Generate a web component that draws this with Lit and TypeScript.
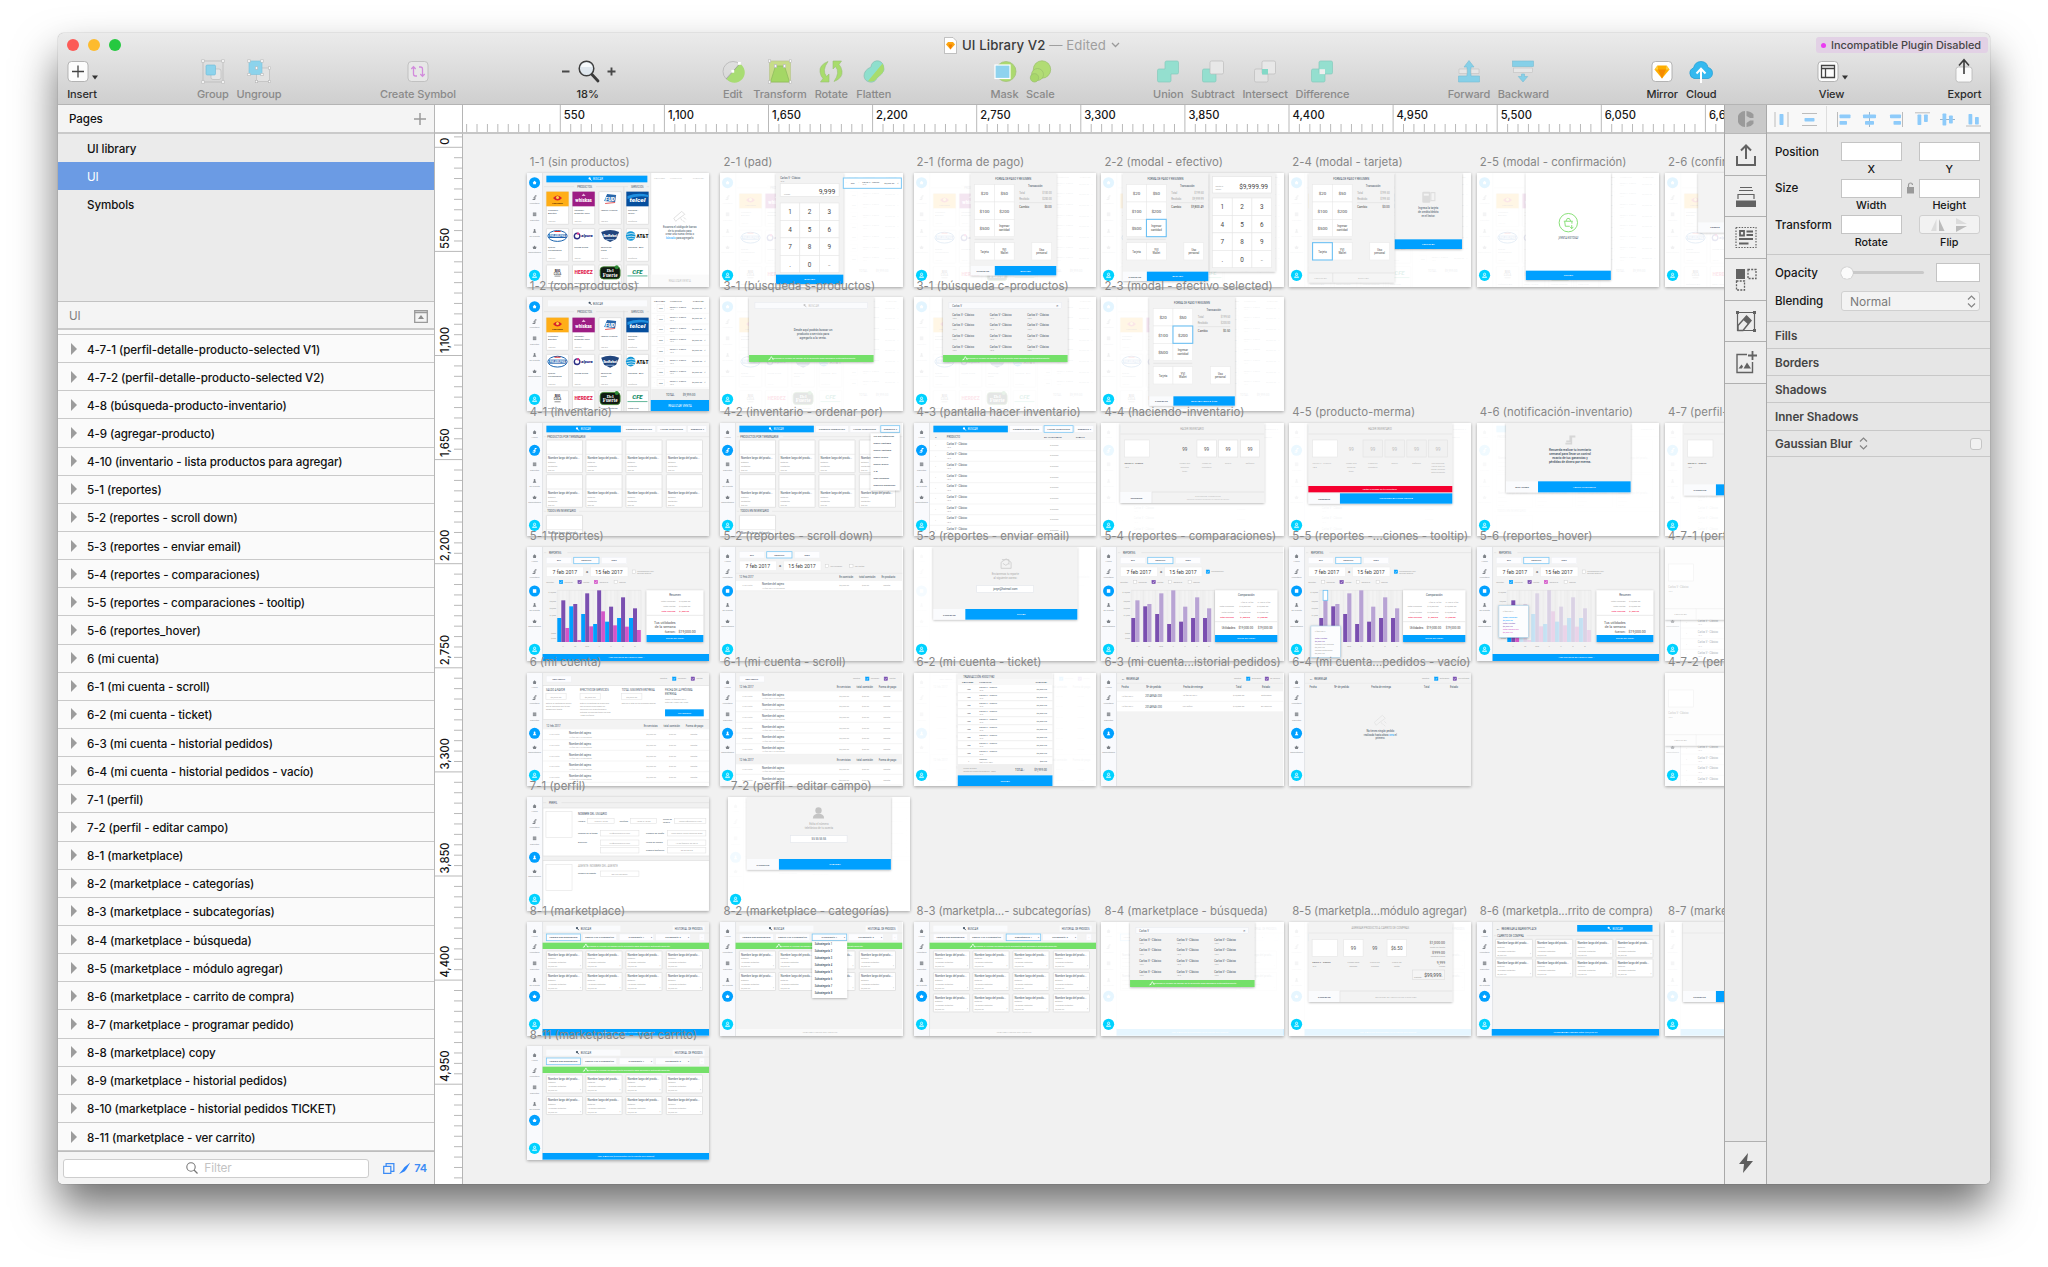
import { LitElement, html, svg, css, nothing } from "lit";
import { customElement, property } from "lit/decorators.js";

/* ------------------------------------------------------------------ */
/* Artboard miniatures: drawn on a 433 x 342 grid, UX/UY px per unit   */
/* ------------------------------------------------------------------ */
const UX = 1 / 2.376;
const UY = 1 / 3;
const BLUE = "#00a0ff";
const INK = "#3d4f61";
const GREY = "#a2a2a2";

type Opt = { s?: string; r?: number; o?: number; sw?: number };
type TOpt = { a?: "start" | "middle" | "end"; w?: number; o?: number };

const box = (x1: number, y1: number, x2: number, y2: number, fill: string, o: Opt = {}) => svg`
  <rect x=${x1 * UX} y=${y1 * UY} width=${(x2 - x1) * UX} height=${(y2 - y1) * UY} fill=${fill}
    stroke=${o.s ?? "none"} stroke-width=${o.sw ?? 0.6} rx=${o.r ?? 0} opacity=${o.o ?? 1}></rect>`;
const txt = (x: number, y: number, s: string, size = 2.6, fill = INK, o: TOpt = {}) => svg`
  <text x=${x * UX} y=${y * UY + size * 0.35} font-size=${size} fill=${fill} text-anchor=${o.a ?? "start"}
    font-weight=${o.w ?? 400} opacity=${o.o ?? 1}>${s}</text>`;
const mid = (x: number, y: number, s: string, size = 2.6, fill = INK, w = 400) => txt(x, y, s, size, fill, { a: "middle", w });
const end = (x: number, y: number, s: string, size = 2.6, fill = INK, w = 400) => txt(x, y, s, size, fill, { a: "end", w });
const dot = (x: number, y: number, r: number, fill: string) => svg`<circle cx=${x * UX} cy=${y * UY} r=${r} fill=${fill}></circle>`;
const line = (x1: number, y1: number, x2: number, y2: number, c = "#dedede", w = 0.6) => svg`
  <line x1=${x1 * UX} y1=${y1 * UY} x2=${x2 * UX} y2=${y2 * UY} stroke=${c} stroke-width=${w}></line>`;
const card = (x1: number, y1: number, x2: number, y2: number) => box(x1, y1, x2, y2, "#fff", { s: "#e0e0e0", sw: 0.9, r: 0.4 });
const seq = (n: number) => Array.from({ length: n }, (_, i) => i);

const glyph = (kind: number, c: string) => {
  switch (kind) {
    case 0: return svg`<path d="M-2 0L0-2L2 0H1.4V1.7H-1.4V0Z" fill=${c}></path>`;
    case 1: return svg`<path d="M-2 1.8H.4V-1.8H2M-1.2 .2H.4" fill="none" stroke=${c} stroke-width="1"></path>`;
    case 2: return svg`<rect x="-1.7" y="-1.8" width="3.4" height="3.6" fill=${c}></rect><path d="M-1.7-.5H1.7M-1.7.7H1.7" stroke="#fff" stroke-width=".3"></path>`;
    case 3: return svg`<circle r=".9" cy="-1" fill=${c}></circle><path d="M-.5-.4H.5L1.8 1.8H-1.8Z" fill=${c}></path>`;
    default: return svg`<path d="M-2-.6H2L1.3 1.6H-1.3ZM-1-.6L0-1.9L1-.6" fill=${c}></path>`;
  }
};
const NAV = ["Home", "Inventario", "Reportes", "Mi Cuenta", "Marketplace"];
const ICON_Y = [28, 74, 124, 174, 223];
const LABEL_Y = [44, 91, 141, 191, 239];
const ACTIVE_Y = [29, 82, 132, 181, 223];
const nav = (active: number) => svg`
  ${box(0, 0, 37, 342, "#f9fafd")}${line(37, 0, 37, 342, "#d9dbde", 0.7)}
  ${NAV.map((n, i) => i === active
    ? svg`${dot(18, ACTIVE_Y[i], 5.5, BLUE)}<g transform="translate(${18 * UX} ${ACTIVE_Y[i] * UY})">${glyph(i, "#fff")}</g>`
    : svg`<g transform="translate(${18 * UX} ${ICON_Y[i] * UY})">${glyph(i, "#7d8288")}</g>${mid(18, LABEL_Y[i], n, 2.3, "#8d9298", 400)}`)}`;
const badge = svg`${dot(18, 307, 5.6, "#00d2ff")}
  <g transform="translate(${18 * UX} ${307 * UY})"><circle cy="-1.1" r="1.1" fill="none" stroke="#fff" stroke-width=".7"></circle><path d="M-2 2.2H2L1 .5H-1Z" fill="none" stroke="#fff" stroke-width=".7"></path></g>`;
const scrim = (o = 0.88) => box(0, 0, 433, 342, "#fff", { o });
const btn = (x1: number, y1: number, x2: number, y2: number, s: string, size = 2.5) => svg`
  ${box(x1, y1, x2, y2, BLUE)}${mid((x1 + x2) / 2, (y1 + y2) / 2, s, size, "#fff")}`;
const chip = (x1: number, y1: number, x2: number, y2: number, s: string, on = false, size = 2.5) => svg`
  ${box(x1, y1, x2, y2, "#fdfdff", { s: on ? "#7cc8f5" : "#eceef2", sw: on ? 0.8 : 0.4 })}${mid((x1 + x2) / 2, (y1 + y2) / 2, s, size, INK, 500)}`;
const lens = (x: number, y: number, c: string) => svg`<g transform="translate(${x * UX} ${y * UY})"><circle cx="-.5" cy="-.6" r="1.1" fill=${c}></circle><path d="M0 0L1.3 1.5" stroke=${c} stroke-width=".9"></path></g>`;
const panel = (x1: number, y1: number, x2: number, y2: number, fill = "#f3f3f3") => svg`
  <rect x=${x1 * UX} y=${y1 * UY} width=${(x2 - x1) * UX} height=${(y2 - y1) * UY} fill=${fill} filter="url(#lift)"></rect>`;
const foot = (x1: number, y1: number, xm: number, x2: number, y2: number, a: string, b: string) => svg`
  ${box(x1, y1, xm, y2, "#fafbfd")}${mid((x1 + xm) / 2, (y1 + y2) / 2 + 1, a, 2.5, INK, 600)}${btn(xm, y1, x2, y2, b)}`;
const scanner = (x: number, y: number, c = "#dcdcdc") => svg`
  <g transform="translate(${x * UX} ${y * UY})" stroke=${c} fill="none" stroke-width=".9"><path d="M-6 2L2-5L5-2L-2 3L-4 5ZM1 2L2 4M4 1L6 3M3 4L5 6"></path></g>`;
const greenBar = (x1: number, y1: number, x2: number, y2: number) => svg`
  ${box(x1, y1, x2, y2, "#74e069")}${mid((x1 + x2) / 2 + 6, (y1 + y2) / 2, "Escanea el código de barras de tu producto para agregarlo automáticamente", 2.45, "#fff")}
  <path d="M${(x1 + x2) * UX / 2 - 42} ${(y1 + y2) * UY / 2 + 1.5}l2-3.4l2 3.4M${(x1 + x2) * UX / 2 - 43} ${(y1 + y2) * UY / 2 + 1.5}l2-1" stroke="#fff" stroke-width=".7" fill="none"></path>`;
const check = (x: number, y: number, c: string, s: string) => svg`
  ${box(x - 4, y - 5, x + 4, y + 5, c || "#fff", { s: c || "#cfcfcf", sw: 0.5 })}
  ${c ? svg`<path d="M${x * UX - 0.9} ${y * UY}l.7 .8l1.1-1.6" stroke="#fff" stroke-width=".5" fill="none"></path>` : nothing}
  ${txt(x + 8, y, s, 2.1, GREY)}`;

/* --- point of sale --- */
const logo = (r: number, c: number, x: number, y: number) => {
  const cx = (x + 26.5) * UX, cy = (y + 22) * UY;
  const g = (body: unknown) => svg`<g transform="translate(${cx} ${cy})" text-anchor="middle" font-weight="900">${body}</g>`;
  switch (r * 4 + c) {
    case 0: return svg`${box(x, y, x + 53, y + 44, "#ffae17")}${g(svg`<path d="M-4.5-1Q0-6 4.5-1Q0 4 -4.5-1" fill="#d8232a"></path><circle cy="-1.6" r="1.5" fill="#ffd24a"></circle><text y="5" font-size="2.3" fill="#5b2b00">PEDIGREE</text>`)}`;
    case 1: return svg`${box(x, y, x + 53, y + 44, "#9d1d84")}${g(svg`<path d="M-2-3L0-5.5L2-3Z" fill="#e8b7dc"></path><text y="2.6" font-size="5.2" fill="#fff" textLength="16.5" lengthAdjust="spacingAndGlyphs">whiskas</text>`)}`;
    case 2: return g(svg`<path d="M-6 2L-3-5L6-4L5 3Z" fill="#2a67ab"></path><text y="1.8" font-size="5.4" fill="#fff" font-style="italic">FUD</text><path d="M-5 4.5L5 3.5" stroke="#d33" stroke-width=".8"></path>`);
    case 3: return svg`${box(x, y, x + 53, y + 44, "#064f9e")}${g(svg`<path d="M-10-3Q0-7 11-4L11-2Q0-4-10 0Z" fill="#1f8fe0"></path><text y="2.6" font-size="5.2" fill="#fff" font-style="italic" textLength="16" lengthAdjust="spacingAndGlyphs">telcel</text>`)}`;
    case 4: return g(svg`<ellipse rx="9.6" ry="5.4" fill="#fff" stroke="#1b63ae" stroke-width="1"></ellipse><rect x="-8.400" y="-2" width="16.800" height="4" fill="#1d5fae"></rect><text y="1.100" font-size="3" fill="#fff" textLength="15.500" lengthAdjust="spacingAndGlyphs">PHILADELPHIA</text><path d="M-3-4.500H3" stroke="#d22" stroke-width="1"></path>`);
    case 5: return g(svg`<circle cx="-6.500" r="2.800" fill="none" stroke="#2c2f86" stroke-width="1.400"></circle><circle cx="-5.500" cy="-2.400" r="1.200" fill="#e2388c"></circle><text x="3.400" y="1.400" font-size="4.200" fill="#2c2f86" font-style="italic">alpura</text>`);
    case 6: return g(svg`<path d="M-9-4Q0-8 9-4L6 3L0 6L-6 3Z" fill="#21457e"></path><text y="1" font-size="4" fill="#fff" textLength="14" lengthAdjust="spacingAndGlyphs">SanRafael</text><path d="M-4 3.6H4" stroke="#9cc1e8" stroke-width=".8"></path>`);
    case 7: return g(svg`<circle cx="-6.800" r="4.800" fill="#1096d6"></circle><path d="M-11-1.6Q-6-3.4-2-1.6M-11 1Q-6-.6-1.7 1M-9.6 3Q-6 2-3 3" stroke="#fff" stroke-width=".7" fill="none"></path><text x="5" y="1.900" font-size="5" fill="#111" textLength="12" lengthAdjust="spacingAndGlyphs">AT&amp;T</text>`);
    case 8: return g(svg`<text y="-.6" font-size="3.4" fill="#444">BIG</text><text y="2.400" font-size="2.900" fill="#666">COLA</text><path d="M-3 3.8H3" stroke="#777" stroke-width=".8"></path>`);
    case 9: return g(svg`<text y="2" font-size="4.6" fill="#e11a4c" textLength="18" lengthAdjust="spacingAndGlyphs">HERDEZ</text>`);
    case 10: return g(svg`<rect x="-10" y="-5.6" width="20" height="12.2" rx="3.4" fill="#101b12" stroke="#3f8a2f" stroke-width=".8"></rect><circle cx="6.6" cy="-5" r="2" fill="#2d8a35"></circle><text y="-.3" font-size="4.8" fill="#fff" font-family="Liberation Serif, serif">Del</text><text y="4.4" font-size="5.2" fill="#fff" font-family="Liberation Serif, serif">Fuerte</text>`);
    default: return g(svg`<text y="1.500" font-size="6" fill="#0f8a63" font-style="italic">CFE</text><path d="M-10 3.6H10" stroke="#3aa57f" stroke-width=".8"></path>`);
  }
};
const NAMES = [["Pedigree -", "Adultos", "100 grs"], ["Whiskas -", "alimento seco", "100 grs"], ["Jamón Virginia", "", "100 grs"], ["Recarga -", "Telcel", "Telefonía"],
  ["Queso", "Philadelphia", "100 grs"], ["Crema ácida", "", "100 ml"], ["Salchicha", "viena", "100 grs"], ["Recarga - ATT", "", "Telefonía"],
  ["Refresco Big", "", ""], ["Mole Herdez", "", ""], ["Frijoles enteros", "", ""], ["Pago CFE", "", ""]];
const CARD_X = [46, 108, 171, 236];
const saleRow = (y: number) => svg`
  ${txt(302, y, "‹", 2.4, GREY)}${box(309, y - 10, 327, y + 10, "#fff", { s: "#ececec", sw: 0.4 })}${mid(318, y + 1, "999", 2.3)}${txt(332, y, "›", 2.4, GREY)}
  ${txt(339, y - 3, "Carlos V - Clásico", 2.1)}${txt(339, y + 5, "18 g", 2, GREY)}${end(416, y, "$9,999.99", 2.3)}${txt(421, y, "✕", 2.2)}
  ${line(296, y + 16, 432, y + 16, "#eee", 0.4)}`;
const pos = (full: boolean, behind = false) => {
  const dy = full ? 6 : 0;
  const ys = [56 + dy, 167 + dy / 1.2, 276 + dy / 1.2];
  return svg`
    ${box(0, 0, 433, 342, behind ? "#f8f8f8" : "#f1f1f1")}${nav(0)}
    ${full ? svg`${box(50, 10, 285, 28, "#fafbfd")}${lens(150, 19, INK)}${txt(157, 20, "BUSCAR")}` : svg`${box(46, 8, 286, 28, BLUE)}${lens(150, 18, "#fff")}${txt(157, 19, "BUSCAR", 2.6, "#fff")}`}
    ${line(40, 41 + dy / 2, 290, 41 + dy / 2)}${box(112, 37, 164, 49, "#f1f1f1")}${box(240, 37, 284, 49, "#f1f1f1")}
    ${mid(137, 41 + dy / 2, "PRODUCTOS")}${mid(262, 41 + dy / 2, "SERVICIOS")}${line(230, 41, 230, 342, "#ddd", 0.8)}
    ${seq(12).map((i) => {
      const r = Math.floor(i / 4), c = i % 4, x = CARD_X[c], y = ys[r];
      return svg`${card(x, y, x + 53, y + 98)}${logo(r, c, x, y)}
        ${txt(x + 4, y + (r === 2 ? 53 : 55), NAMES[i][0], 2.5)}${txt(x + 4, y + 65, NAMES[i][1], 2.5)}${txt(x + 4, y + 90, NAMES[i][2], 2.2, GREY)}`;
    })}
    ${box(294, 0, 433, 342, "#fff")}${line(294, 0, 294, 342, "#ddd")}
    ${txt(302, full ? 12 : 16, "CANTIDAD", 2.3, full ? "#666" : "#ccc")}${txt(340, full ? 12 : 16, "PRODUCTO", 2.3, full ? "#666" : "#ccc")}${txt(394, full ? 12 : 16, "SUBTOTAL", 2.3, full ? "#666" : "#ccc")}
    ${full
      ? svg`${seq(8).map((i) => saleRow(33 + i * 32))}${box(295, 276, 433, 309, behind ? "#fafafa" : "#efefef")}${txt(330, 293, "TOTAL", 2.9)}${end(400, 293, "$9,999.00", 2.9)}${behind ? nothing : btn(294, 309, 433, 342, "REALIZAR VENTA", 3)}`
      : svg`${scanner(363, 130)}${mid(363, 162, "Escanea el código de barras", 2.7)}${mid(363, 173, "de tu producto para", 2.7)}${mid(363, 184, "crear una nueva venta o", 2.7)}
        <text x=${363 * UX} y=${196 * UY + 0.9} font-size="2.7" fill=${INK} text-anchor="middle"><tspan fill=${BLUE}>búscalo</tspan> para agregarlo</text>
        ${box(294, 305, 433, 342, "#fafafa")}${mid(363, 323, "REALIZAR VENTA", 2.8, "#c4c4c4")}`}`;
};
const fadedPos = svg`${pos(true, true)}${scrim(0.89)}`;

const keypad = (x: number, y: number, w: number, h: number, last: string) =>
  ["1", "2", "3", "4", "5", "6", "7", "8", "9", ".", "0", last].map((k, i) => {
    const kx = x + (i % 3) * w, ky = y + Math.floor(i / 3) * h;
    return svg`${box(kx, ky, kx + w, ky + h, "#fff", { s: "#e6e6e6", sw: 0.6 })}${mid(kx + w / 2, ky + h / 2 + 1, k, i === 11 ? 3.6 : 6.4, "#4a4a4a", 400)}`;
  });
const pay = (dx: number, hl: string, bottom: number, total: string[], accept: string, off = false) => {
  const cell = (x: number, y: number, s: string[]) => svg`
    ${box(x + dx, y, x + 47 + dx, y + 52, "#fff", { s: s[0] === hl ? "#6cc0f3" : "#e8e8e8", sw: s[0] === hl ? 1.1 : 0.5 })}
    ${s.map((t, i) => mid(x + 23.5 + dx, y + 27 + (i - (s.length - 1) / 2) * 11, t, s[0][0] === "$" ? 4.4 : 2.8, "#4a4a4a", 400))}`;
  const order = [["$20"], ["$50"], ["$100"], ["$200"], ["$500"], ["Ingresar", "cantidad"]];
  const cells: Array<[number, number, string[]]> = order.map((s, i) => [144 + (i % 2) * 47, 35 + Math.floor(i / 2) * 52, s]);
  cells.push([144, 209, ["Tarjeta"]], [191, 209, ["YVI", "Wallet"]], [280, 209, ["Uso", "personal"]]);
  const ordered = [...cells.filter((c) => c[2][0] !== hl), ...cells.filter((c) => c[2][0] === hl)];
  return svg`
    ${panel(135 + dx, 0, 338 + dx, bottom)}${mid(236 + dx, 17, "FORMA DE PAGO Y RESUMEN", 2.7)}
    ${ordered.map(([x, y, s]) => cell(x, y, s))}
    ${line(144 + dx, 199, 237 + dx, 199)}
    ${mid(288 + dx, 40, "Transacción", 2.7)}${txt(250 + dx, 61, "Total", 2.6, GREY)}${end(327 + dx, 61, total[0], 2.6, GREY)}
    ${txt(250 + dx, 77, "Recibido", 2.6, GREY)}${end(327 + dx, 77, total[1], 2.6, GREY)}${line(250 + dx, 89, 327 + dx, 89)}
    ${txt(250 + dx, 103, "Cambio", 2.9, "#444")}${end(327 + dx, 103, total[2], 2.9, "#444")}
    ${off
      ? svg`${box(135 + dx, bottom - 28, 338 + dx, bottom, "#f5f5f5")}${line(192 + dx, bottom - 28, 192 + dx, bottom)}${line(135 + dx, bottom - 28, 338 + dx, bottom - 28)}${mid(163 + dx, bottom - 14, "CANCELAR", 2.5, "#c8c8c8")}${mid(265 + dx, bottom - 14, "ACEPTAR", 2.5, "#c8c8c8")}`
      : foot(135 + dx, bottom - 28, 192 + dx, 338 + dx, bottom, "CANCELAR", accept)}`;
};
const found = svg`${seq(12).map((i) => svg`${txt(91 + (i % 3) * 89, 53 + Math.floor(i / 3) * 32, "Carlos V - Clásico", 2.8)}${txt(91 + (i % 3) * 89, 64 + Math.floor(i / 3) * 32, "18 g", 2.2, GREY)}`)}`;
const search = (hit: boolean) => svg`
  ${panel(69, 0, 365, 195)}${box(83, 16, 351, 35, "#fafbfd", { s: "#e5e8ee", sw: 0.5 })}
  ${hit ? svg`${txt(91, 26, "Carlos V", 2.6)}${txt(338, 26, "✕", 3)}${found}`
    : svg`${lens(202, 26, "#c5c5c5")}${txt(210, 26, "BUSCAR", 2.8, "#c5c5c5")}${mid(221, 99, "Desde aquí podrás buscar un", 3)}${mid(221, 110, "producto o servicio para", 3)}${mid(221, 122, "agregarlo a la venta.", 3)}`}
  ${greenBar(69, 174, 365, 195)}`;

/* --- inventory --- */
const STOCK_X = [46, 140, 235, 331];
const stock = (x: number, y: number) => svg`${card(x, y, x + 86, y + 98)}${line(x, y + 43, x + 86, y + 43, "#e2e2e2")}
  ${txt(x + 4, y + 54, "Nombre largo del produ...", 2.8)}${txt(x + 4, y + 68, "Detalles", 2.1, GREY)}${txt(x + 4, y + 80, "Restantes", 2.1, GREY)}${txt(x + 4, y + 92, "$99.99", 2.1, GREY)}`;
const invTop = (hl: number) => svg`
  ${btn(46, 8, 223, 28, "")}${lens(120, 18, "#fff")}${txt(128, 19, "BUSCAR", 2.6, "#fff")}
  ${chip(227, 8, 305, 28, "AGREGAR PRODUCTOS")}${chip(309, 8, 378, 28, "HACER INVENTARIO", hl === 1)}${chip(382, 8, 427, 28, "ORDENAR ▾", hl === 2)}`;
const inventory = (menu: boolean) => svg`
  ${box(0, 0, 433, 342, "#f4f4f4")}${nav(1)}${invTop(menu ? 2 : 0)}
  ${line(40, 41, 433, 41, "#e2e2e2")}${box(46, 36, 150, 47, "#f4f4f4")}${txt(48, 41, "PRODUCTOS POR TERMINARSE", 2.7)}
  ${STOCK_X.map((x) => svg`${stock(x, 51)}${stock(x, 155)}`)}
  ${line(40, 265, 433, 265, "#e2e2e2")}${box(46, 260, 124, 270, "#f4f4f4")}${txt(48, 265, "TODOS EN INVENTARIO", 2.7)}${stock(46, 277)}
  ${menu ? svg`${panel(358, 31, 427, 202, "#fff")}${["Ver por categorías", "Mayor cantidad", "Menor cantidad", "Mayor precio", "Menor precio", "A-Z", "Más vendidos", "Mayores ganancias"].map((s, i) => txt(365, 40 + i * 21, s, 2.5, INK, { w: 500 }))}` : nothing}`;
const stockList = svg`
  ${box(0, 0, 433, 342, "#f4f4f4")}${nav(1)}${invTop(1)}
  ${txt(50, 41, "#", 2.5)}${txt(78, 41, "PRODUCTO", 2.6)}${mid(330, 41, "EN INVENTARIO", 2.5)}${mid(395, 41, "STATUS", 2.5)}
  ${box(38, 51, 433, 342, "#fff")}
  ${seq(9).map((i) => svg`${txt(50, 67 + i * 32, "1", 2, GREY)}${txt(78, 62 + i * 32, "Carlos V - Clásico", 2.6)}${txt(78, 73 + i * 32, "18 g", 2.1, GREY)}${mid(333, 66 + i * 32, "5 piezas", 2.3, GREY)}${line(38, 83 + i * 32, 433, 83 + i * 32, "#eee")}`)}`;
const count = (waste: boolean) => {
  const xs = waste ? [102, 154, 206, 258, 309] : [199, 251, 302, 354];
  const labels = [["Piezas que", "deberías", "tener"], ["Piezas en", "inventario"], ["Expiró"], ["Dañados"], ["Uso personal", "Haces que no", "hayas vendido", "anteriormente"]];
  const shift = waste ? 45 : 0;
  const h = waste ? 242 : 240;
  return svg`${stockList}${scrim(0.92)}${panel(46, 0, 388, h)}${mid(216, 17, "HACER INVENTARIO", 2.6, GREY)}${line(46, 33, 388, 33, "#e0e0e0")}
    ${box(56, 51, 115, 102, "#fff", { s: "#e6e6e6" })}${txt(56, 121, "Carlos V - Clásico", 2.4, waste ? "#bbb" : "#444")}${txt(56, 132, "18 g", 2.1, GREY)}
    ${(waste ? [148, 199, 251, 303, 354] : xs).map((x, i) => svg`
      ${i || shift === 0 && i ? box(x - (waste && i === 0 ? 0 : 23), 51, x + 23, 102, waste ? "#f1f1f1" : "#fff", { s: "#e2e2e2" }) : nothing}
      ${mid(x, 79, "99", 4.6, waste ? "#bdbdbd" : "#555", 400)}
      ${labels[i].map((s, j) => mid(x, 122 + j * (i === 4 ? 9 : 11), s, 2.2, "#b4b4b4"))}`)}
    ${waste
      ? svg`${box(46, 189, 388, 208, "#f5002f")}${mid(216, 199, "Faltan 5 piezas en tu inventario", 2.5, "#fff")}${foot(46, 211, 121, 388, 242, "CORREGIR", "INGRESARLAS COMO MERMA")}`
      : svg`${box(46, 207, 121, 240, "#fafbfd")}${mid(84, 224, "ANTERIOR", 2.5, INK, 600)}${line(121, 207, 388, 207)}${line(121, 207, 121, 240)}${mid(254, 220, "SIGUIENTE PRODUCTO", 2.5, "#c0c0c0")}${mid(254, 230, "También puedes escanear el código de barras", 2.1, "#c8c8c8")}`}
    ${badge}`;
};

/* --- reports --- */
const PURPLE = "#7a4fb0";
const PINK = "#d355c8";
const A = [213, 178, 201, 231, 224, 213, 213];
const B = [160, 171, 139, 130, 179, 151, 184];
const C = [243, 279, 238, 193, 235, 239, 249];
const tip = (y1: number, y2: number, rows: string[], colors: string[]) => svg`
  <rect x=${52 * UX} y=${y1 * UY} width=${70 * UX} height=${(y2 - y1) * UY} fill="#fcfdfe" stroke="#a9cfe6" stroke-width=".6" filter="url(#lift)"></rect>
  ${rows.map((s, i) => txt(61, y1 + 17 + i * 9.2, s, 2.3, colors[i]))}`;
const report = (mode: "plain" | "compare" | "tip" | "hover") => {
  const cmp = mode === "compare" || mode === "tip";
  const left = cmp ? 271 : 284;
  return svg`
    ${box(0, 0, 433, 342, "#f3f3f3")}${nav(2)}
    ${line(40, 17, 433, 17, "#ddd")}${box(46, 11, 96, 23, "#f3f3f3")}${txt(52, 17, "REPORTES", 2.6)}
    ${chip(46, 31, 106, 50, "DIA")}${chip(111, 31, 171, 50, "SEMANA", true)}${chip(177, 31, 237, 50, "MES")}
    ${box(46, 60, 134, 88, "#fff", { s: "#eee" })}${mid(90, 75, "7 feb 2017", 5.2, "#444", 400)}${mid(143, 75, "a", 4, "#444", 400)}${box(151, 60, 240, 88, "#fff", { s: "#eee" })}${mid(195, 75, "15 feb 2017", 5.2, "#444", 400)}
    ${check(254, 74, cmp ? BLUE : "", mode === "compare" ? "Comparación" : "Comparación con")}${mode === "compare" ? nothing : txt(262, 80, "periodo anterior", 2, GREY)}
    ${txt(46, 105, "Mostrar", 2.2, GREY)}${check(81, 105, cmp ? "" : BLUE, "Compras")}${check(125, 105, PURPLE, "Ventas")}${check(164, 105, cmp ? "" : PINK, "Ganancia")}${check(211, 105, "", "Merma")}
    ${["$10,000", "$5,000", "$3,000", "$1,000", "$500", "$300"].map((s, i) => end(69, [137, 163, 184, 204, 259, 274][i], s, 2.2, GREY))}
    ${seq(8).map((i) => line(72 + i * 28.4, 130, 72 + i * 28.4, 285, "#e2e2e2"))}${seq(21).map((i) => line(76 + i * 9.5, 130, 76 + i * 9.5, 285, "#e6e6e6", 0.4))}
    ${line(72, 130, 271, 130, "#ddd", 0.5)}
    ${seq(7).map((i) => {
      const x = 72 + i * 28.4;
      const o = mode === "hover" && i > 0 ? 0.18 : 1;
      return cmp
        ? svg`${box(x, A[i], x + 9.6, 285, PURPLE)}${box(x + 9.6, B[i], x + 19.5, 285, "#b8a3d4")}`
        : svg`${box(x, A[i], x + 9.5, 285, BLUE, { o })}${box(x + 9.5, B[i], x + 19, 285, PURPLE, { o })}${box(x + 19, C[i], x + 28, 285, PINK, { o })}`;
    })}
    ${["L", "M", "MIE", "J", "V", "S", "D"].map((s, i) => mid(86 + i * 28.4, 297, s, 2.2, GREY))}
    ${panel(left, 130, 419, 285, "#fff")}${mid((left + 419) / 2, 145, cmp ? "Comparación" : "Resumen", 2.8)}
    ${cmp
      ? svg`${mid(347, 165, "7 feb al 15 feb", 2, GREY)}${mid(387, 165, "31 ene al 6 feb", 2, GREY)}
        ${["Total compras", "Total ventas", "Total mermas"].map((s, i) => svg`${end(316, 179 + i * 16, s, 2.3, i === 2 ? "#f5003d" : GREY)}${mid(342, 179 + i * 16, i === 2 ? "$1,000.00" : "$10,000.00", 2.3, i === 2 ? "#f5003d" : GREY)}${mid(384, 179 + i * 16, i === 2 ? "$1,000.00" : "$10,000.00", 2.3, i === 2 ? "#f5003d" : GREY)}`)}
        ${line(left, 224, 419, 224)}${end(319, 244, "Utilidades", 3.1, "#444")}${mid(344, 244, "$19,000.00", 3, "#444")}${mid(390, 244, "$19,000.00", 3, "#444")}`
      : svg`${["Total compras", "Total ventas", "Total mermas"].map((s, i) => svg`${end(353, 164 + i * 14.5, s, 2.3, i === 2 ? "#f5003d" : GREY)}${txt(361, 164 + i * 14.5, i === 2 ? "$1,000.00" : "$10,000.00", 2.3, i === 2 ? "#f5003d" : GREY)}`)}
        ${line(left, 205, 419, 205)}${end(353, 226, "Tus utilidades", 3.5, "#555")}${end(353, 239, "de la semana", 3.5, "#555")}${end(353, 253, "fueron:", 3.5, "#555")}${txt(360, 253, "$19,000.00", 3.5, "#444")}`}
    ${btn(left, 264, 419, 285, "Enviar por email", 2.5)}
    ${cmp ? nothing : svg`${btn(37, 321, 433, 342, "‹     VER REPORTE DE TIEMPO REAL     ›", 2.4)}`}
    ${mode === "tip" ? svg`${box(81, 130, 92, 160, "#fff", { s: "#6cc0f3", sw: 0.8 })}${tip(237, 331, ["7 feb 2017", "", "Total ventas", "$9,999.99", "Ventas con merma", "$9,999.99", "Ventas anteriores", "$9,999.99"], [GREY, "", "#7a4fb0", "#7a4fb0", GREY, GREY, GREY, GREY])}` : nothing}
    ${mode === "hover" ? tip(175, 271, ["7 feb 2017", "", "Total compras", "$9,999.99", "Total ventas", "$9,999.99", "Total ganancias", "$9,999.99"], [GREY, "", BLUE, BLUE, PURPLE, PURPLE, PINK, PINK]) : nothing}`;
};
const cashier = (y: number) => svg`${txt(53, y, "# de venta", 2.2, "#b5b5b5")}${txt(100, y - 4, "Nombre del cajero", 2.7)}${txt(100, y + 7, "12 feb 2017 a las 08:00", 2.2, "#b0b0b0")}
    ${mid(295, y, "$9,999.99", 2.3, GREY)}${mid(346, y, "$99.99", 2.3, GREY)}${mid(396, y, "Tarjeta", 2.3, GREY)}${line(38, y + 15, 433, y + 15, "#eee")}`;
const cashierWide = (y: number) => svg`${txt(53, y, "# de venta", 2.2, "#b5b5b5")}${txt(100, y - 4, "Nombre del cajero", 2.7)}${txt(100, y + 7, "12 feb 2017 a las 08:00", 2.2, "#b0b0b0")}
    ${mid(257, y, "$9,999.99", 2.3, GREY)}${mid(345, y, "$99.99", 2.3, GREY)}${mid(396, y, "Tarjeta", 2.3, GREY)}${line(38, y + 15, 433, y + 15, "#eee")}`;
const reportScroll = svg`
  ${box(0, 0, 433, 342, "#f3f3f3")}${nav(2)}
  ${chip(46, 14, 106, 33, "DIA")}${chip(111, 14, 171, 33, "SEMANA", true)}${chip(177, 14, 237, 33, "MES")}
  ${box(46, 42, 134, 71, "#fff", { s: "#eee" })}${mid(90, 57, "7 feb 2017", 5.2, "#444", 400)}${mid(143, 57, "a", 4, "#444", 400)}${box(151, 42, 240, 71, "#fff", { s: "#eee" })}${mid(195, 57, "15 feb 2017", 5.2, "#444", 400)}
  ${check(254, 57, "", "Ver compras")}${check(312, 57, "", "Ver ventas")}${line(38, 79, 433, 79, "#e6e6e6")}
  ${txt(46, 89, "12 Feb 2017", 2.6)}${mid(300, 89, "En comisión", 2.6)}${mid(350, 89, "total comisión", 2.6)}${mid(400, 89, "En producto", 2.6)}
  ${box(38, 102, 433, 131, "#fff")}${cashier(116)}`;
const cashHead = (y: number) => svg`${txt(46, y, "12 feb 2017", 2.7)}${mid(294, y, "En servicios", 2.6)}${mid(344, y, "total comisión", 2.6)}${mid(398, y, "Forma de pago", 2.6)}`;
const filters = (a: string, b: string) => svg`${txt(316, 17, "Mostrar", 2.1, GREY)}${check(350, 17, BLUE, a)}${check(394, 17, PURPLE, b)}`;
const account = svg`
  ${box(0, 0, 433, 342, "#f3f3f3")}${nav(3)}${chip(46, 9, 105, 27, "VER PERFIL")}${filters("Compras", "Ventas")}
  ${box(38, 37, 433, 140, "#fff", { s: "#ddd" })}
  ${[[45, "SALDO A FAVOR"], [126, "EFECTIVO DE SERVICIOS"], [225, "TOTAL SIGUIENTE ENTREGA"], [328, "FECHA DE LA PRÓXIMA"]].map(([x, s]) => txt(x as number, 52, s as string, 2.6))}
  ${txt(328, 62, "ENTREGA", 2.6)}
  ${[45, 126, 225].map((x) => svg`${box(x, 62, x + 48, 80, "#fff", { s: "#e4e4e4" })}${mid(x + 24, 71, "$9,999.99", 2.5, GREY)}`)}
  ${["Esta es la cantidad de dinero", "que te debemos que te han", "pagado por tarjeta"].map((s, i) => txt(45, 91 + i * 9, s, 2, GREY))}
  ${["Este es la cantidad de dinero que", "has recibido como pagos de", "servicios y es la que tendrás a", "entregar en persona todos los días", "15:00 a la fecha"].map((s, i) => txt(126, 91 + i * 9, s, 2, GREY))}
  ${txt(225, 91, "Este es el total de tus próximas pedido", 2, GREY)}${txt(328, 79, "lunes 12 febrero 2017", 2.2, GREY)}${txt(328, 88, "entre las 12:00 y las 16:00", 2, GREY)}${btn(328, 109, 420, 130, "Ver pedidos")}
  ${cashHead(158)}${box(38, 169, 433, 342, "#fff")}${seq(6).map((i) => cashier(185 + i * 32))}`;
const accountScroll = svg`
  ${box(0, 0, 433, 342, "#f3f3f3")}${nav(3)}${chip(46, 9, 105, 27, "VER PERFIL")}${filters("Compras", "Ventas")}
  ${cashHead(43)}${box(38, 55, 433, 244, "#fff")}${seq(6).map((i) => cashier(69 + i * 32))}
  ${cashHead(262)}${box(38, 274, 433, 342, "#fff")}${seq(3).map((i) => cashier(289 + i * 32))}`;
const orders = (empty: boolean) => svg`
  ${box(0, 0, 433, 342, "#f3f3f3")}${nav(3)}${txt(48, 17, "←", 3.8)}${txt(60, 17, "REGRESAR", 2.6)}${filters("Entregado", empty ? "Sin entregar" : "En camino")}
  ${line(38, 31, 433, 31, "#e8e8e8")}
  ${txt(49, 43, "Fecha", 2.6)}${mid(125, 43, "Nº de pedido", 2.6)}${mid(219, 43, "Fecha de entrega", 2.6)}${mid(327, 43, "Total", 2.6)}${mid(392, 43, "Estado", 2.6)}
  ${empty
    ? svg`${scanner(217, 142, "#e4e4e4")}${mid(217, 173, "No tienes ningún pedido", 2.6)}<text x=${217 * UX} y=${185 * UY + 0.9} font-size="2.6" fill=${INK} text-anchor="middle">realizado hasta ahora <tspan fill=${BLUE}>crea</tspan> el</text>${mid(217, 196, "primero.", 2.6)}`
    : svg`${box(38, 55, 433, 115, "#fff")}${line(38, 85, 433, 85, "#eee")}${[69, 101].map((y, i) => svg`${txt(49, y, "12 feb 2017", 2.2, GREY)}${txt(105, y, "20148945-200", 2.6)}${txt(194, y - 1, i ? "Por definir" : "15 feb de 2017", 2.2, GREY)}${mid(327, y - 1, "$10,000.00", 2.3, GREY)}${mid(393, y - 1, i ? "En camino" : "Entregado", 2.3, GREY)}`)}`}`;
const ticket = svg`${accountScroll}${scrim(0.93)}${panel(104, 0, 329, 340, "#fff")}${box(104, 0, 329, 18, "#f4f4f4")}${txt(117, 11, "TRANSACCIÓN #00021982", 2.6)}
  ${box(104, 18, 329, 36, "#f8f8f8")}${txt(114, 27, "CANTIDAD", 2.4)}${txt(155, 27, "PRODUCTO", 2.4)}${end(316, 27, "SUBTOTAL", 2.4)}
  ${seq(10).map((i) => svg`${mid(130, 48 + i * 24, i === 9 ? "1" : "100", 2.3)}${txt(155, 43 + i * 24, i === 9 ? "Iusacell" : "Carlos V - Clásico", 2.3)}${txt(155, 51 + i * 24, i === 9 ? "(55)12-34-4567" : "18 g", 2, GREY)}${end(316, 48 + i * 24, i === 9 ? "$99.99" : "$9,999.99", 2.4)}${line(104, 59 + i * 24, 329, 59 + i * 24, "#e6e6e6")}`)}
  ${box(104, 274, 329, 307, "#efefef")}${txt(117, 287, "Forma de pago", 2, GREY)}${txt(117, 294, "Tarjeta de crédito terminación - 0000", 2, GREY)}${txt(240, 291, "TOTAL:", 2.9)}${end(316, 291, "$9,999.00", 2.9)}${btn(104, 307, 329, 340, "CERRAR")}${badge}`;
const field = (x: number, y: number, w: number, s: string) => svg`${box(x, y - 8, x + w, y + 8, "#fff", { s: "#dedede", sw: 0.5 })}${mid(x + w / 2, y + 1, s, 2.3, "#aaa")}`;
const profile = svg`
  ${box(0, 0, 433, 342, "#f1f1f1")}${nav(3)}${line(38, 17, 433, 17)}${box(46, 11, 82, 23, "#f1f1f1")}${txt(52, 17, "PERFIL", 2.7)}
  ${box(38, 33, 433, 177, "#fff", { s: "#ddd" })}${box(38, 191, 433, 342, "#fff", { s: "#ddd" })}
  ${box(45, 43, 107, 121, "#fff", { s: "#e3e3e3" })}${box(45, 202, 107, 280, "#fff", { s: "#e3e3e3" })}
  ${txt(121, 50, "NOMBRE DEL USUARIO", 2.8)}${txt(121, 72, "Horario", 2.2)}${field(144, 72, 63, "10:00 a 18:00")}${txt(220, 72, "Teléfono", 2.2)}${field(246, 72, 62, "10:00 a 18:00")}${txt(323, 68, "Correo de", 2.1)}${txt(323, 77, "usuario", 2.1)}${field(351, 72, 74, "usuario@negocio.com")}
  ${txt(121, 109, "Nombre de la tienda", 2.2)}${field(175, 109, 91, "yvi@minegocio.com")}${txt(283, 109, "Nombre del dueño", 2.2)}${field(334, 109, 91, "José Mario Pérez Morelos Díaz")}
  ${txt(121, 137, "Dirección", 2.2)}${field(175, 137, 91, "yvi@minegocio.com")}${field(175, 160, 91, "")}${txt(283, 137, "Fecha de ingreso", 2.2)}${field(334, 137, 91, "12 de febrero de 2016")}${txt(283, 160, "Número telefónico", 2.2)}${field(334, 160, 91, "55 55 55 55")}
  ${txt(121, 208, "AGENTE: NOMBRE DEL AGENTE", 2.8, GREY)}${txt(121, 230, "Número de agente", 2.2)}${field(175, 230, 91, "5512345678901")}`;

/* --- marketplace --- */
const offer = (x: number, y: number, w = 86) => svg`${card(x, y, x + w, y + 54)}${txt(x + 4, y + 11, "Nombre largo del produ...", 2.8)}${txt(x + 4, y + 23, "Detalles", 2.1, GREY)}${txt(x + 4, y + 35, "15 piezas restantes", 2.1, GREY)}${txt(x + 4, y + 47, "$9,999.99", 2.1, GREY)}${end(x + w - 4, y + 45, "›", 3, "#777")}`;
const market = (hl: number, rows: number, bar: boolean, menu = false, green = true) => svg`
  ${box(0, 0, 433, 342, green ? "#f3f3f3" : "#fcfcfc")}${nav(4)}
  ${box(46, 11, 222, 29, "#fafbfd")}${lens(120, 20, INK)}${txt(128, 20, "BUSCAR", 2.7)}${box(346, 11, 422, 29, "#fafbfd")}${mid(384, 20, "HISTORIAL DE PEDIDOS", 2.6)}
  ${line(38, 33, 433, 33, "#e8e8e8")}
  ${[["PEDIDO RECOMENDADO", 46, 127], ["TODAS LAS CATEGORÍAS", 132, 213], [rows === 3 ? "Subcategoría 1" : "CATEGORÍA 1", 219, 301], ["CATEGORÍA 2", 306, 388]].map(([s, a, b], i) => svg`${chip(a as number, 36, b as number, 56, s as string, hl === i, 2.55)}${i > 1 ? end((b as number) - 4, 45, "▾", 2.4) : nothing}`)}
  ${chip(409, 36, 422, 56, "›")}
  ${green ? greenBar(37, 62, 433, 81) : nothing}
  ${seq(rows * 4).map((i) => offer(STOCK_X[i % 4], 87 + Math.floor(i / 4) * 64.5))}
  ${bar ? btn(37, 321, 433, 341, "VER CARRITO   (5 productos en tu carrito de compra)", 2.5) : svg`${box(38, 321, 433, 342, "#fafafa")}${mid(238, 332, "REALIZAR PEDIDO DEL CARRITO", 2.4, "#c4c4c4")}`}
  ${menu ? svg`${panel(219, 58, 302, 228, "#fff")}${seq(8).map((i) => txt(225, 67 + i * 21, `Subcategoría ${i + 1}`, 2.6, INK, { w: 500 }))}` : nothing}`;
const fadedMarket = svg`${market(0, 2, true, false, false)}${scrim(0.9)}`;
const cart = svg`
  ${box(0, 0, 433, 342, "#f3f3f3")}${nav(4)}${txt(45, 20, "←", 3.8)}${txt(58, 20, "REGRESAR A MARKETPLACE", 2.7)}${btn(238, 9, 417, 29, "")}${lens(314, 19, "#fff")}${txt(322, 20, "BUSCAR", 2.7, "#fff")}
  ${line(40, 41, 433, 41)}${box(46, 36, 118, 46, "#f3f3f3")}${txt(48, 41, "CARRITO DE COMPRA", 2.7)}
  ${seq(8).map((i) => offer(44 + (i % 4) * 95.4, 52 + Math.floor(i / 4) * 59, 88))}
  ${btn(35, 321, 433, 341, "PROGRAMAR PEDIDO     Total: $99,999.99", 2.5)}`;
const addItem = svg`${fadedMarket}${panel(47, 0, 388, 240)}${mid(217, 18, "AGREGAR PRODUCTO A CARRITO DE COMPRAS", 2.7, GREY)}${line(47, 33, 388, 33, "#e4e4e4")}
  ${box(55, 53, 115, 103, "#fff", { s: "#e6e6e6" })}${txt(55, 122, "Carlos V - Clásico", 2.4, "#444")}${txt(55, 133, "18 g", 2.1, GREY)}
  ${box(130, 53, 176, 103, "#fff", { s: "#e6e6e6" })}${box(233, 53, 279, 103, "#fff", { s: "#e6e6e6" })}
  ${mid(153, 79, "99", 4.6, "#555", 400)}${mid(204, 79, "99", 4.6, "#555", 400)}${mid(256, 79, "$6.50", 4.6, "#555", 400)}
  ${[["Piezas para", "agregar"], ["Precio de", "compra"], ["Precio de", "venta"]].map((l, i) => l.map((s, j) => mid([153, 204, 256][i], 122 + j * 11, s, 2.3, GREY)))}
  ${end(371, 62, "$1,000.00", 3.6, "#555")}${end(371, 75, "Costo sin tarjeta", 2.1, GREY)}${end(371, 92, "$999.00", 3.6, "#555")}${end(371, 104, "Compra a pieza", 2.1, GREY)}${end(371, 121, "9,999", 3.4, "#555")}${end(371, 134, "Piezas", 2.1, GREY)}
  ${box(293, 144, 370, 172, "#f5f5f5", { s: "#ddd" })}${txt(297, 165, "Subtotal", 2.1, GREY)}${end(365, 161, "$99,999.", 4.8, "#444", 400)}
  ${box(47, 207, 121, 240, "#fafbfd")}${mid(84, 224, "CANCELAR", 2.5, INK, 600)}${line(121, 207, 388, 207)}${line(121, 207, 121, 240)}${mid(254, 224, "AGREGAR AL CARRITO DE COMPRAS", 2.5, "#c0c0c0")}${badge}`;
const ghost = (h: number) => svg`${stockList}${scrim(0.5)}${panel(0, 0, 433, h, "#fdfdfd")}${box(8, 51, 68, 102, "#fff", { s: "#f0f0f0" })}${txt(8, 121, "Carlos V - Clásico", 2.6, "#c8c8c8")}${txt(8, 132, "18 g", 2.1, "#ccc")}
  ${line(0, h - 33, 433, h - 33, "#eee")}${line(74, h - 33, 74, h, "#eee")}${mid(37, h - 17, "CANCELAR", 2.5, "#c4c4c4")}${badge}`;

const ask = (x1: number, x2: number, icon: unknown, lines: string[], value: string, ok: string) => svg`
  ${panel(x1, 0, x2, 218)}${icon}${lines.map((s, i) => mid((x1 + x2) / 2, 82 + i * 12, s, 2.8, "#aaa"))}
  ${box((x1 + x2) / 2 - 68, 116, (x1 + x2) / 2 + 67, 136, "#fff", { s: "#e3e6ec" })}${mid((x1 + x2) / 2, 126, value, 2.8)}${foot(x1, 186, x1 + 76, x2, 218, "CANCELAR", ok)}${badge}`;

const BOARDS: Record<string, unknown> = {
  empty: svg`${pos(false)}${badge}`,
  full: svg`${pos(true)}${badge}`,
  pad: svg`${fadedPos}${panel(133, 0, 293, 333)}${txt(143, 14, "Carlos V - Clásico", 2.6)}${txt(143, 24, "18 g", 2, GREY)}${box(143, 31, 283, 71, "#fff", { s: "#e3e3e3" })}${txt(152, 63, "Piezas", 2.1, GREY)}${end(274, 56, "9,999", 6.8, "#444", 400)}
    ${keypad(143, 90, 46.6, 52.3, "←")}${btn(133, 305, 293, 333, "ACEPTAR")}${box(293, 15, 431, 46, "#fff", { s: "#7cc8f5", sw: 1 })}${txt(299, 28, "‹", 2.4, GREY)}${mid(315, 31, "999", 2.3)}${txt(329, 28, "›", 2.4)}${txt(338, 28, "Carlos V - Clásico", 2.2)}${txt(338, 35, "18 g", 2, GREY)}${end(414, 31, "$9,999.99", 2.3)}${txt(421, 31, "✕", 2.2)}${badge}`,
  pay: svg`${fadedPos}${pay(0, "", 307, ["$100.00", "$200.00", "$0.00"], "ACEPTAR")}${badge}`,
  cash: svg`${fadedPos}${panel(255, 0, 414, 296)}${box(265, 11, 405, 60, "#fff", { s: "#e3e3e3" })}${txt(272, 40, "Monto a", 2.1, GREY)}${txt(272, 48, "recibir", 2.1, GREY)}${end(397, 41, "$9,999.99", 6.6, "#444", 400)}${keypad(265, 75, 46.8, 52.3, "←")}
    ${pay(-83, "Ingresar", 324, ["$199.50", "$9,999.99", "$9,800.49"], "ACEPTAR")}${badge}`,
  cash200: svg`${fadedPos}${pay(-20, "$200", 326, ["$199.50", "$200.00", "$0.50"], "ACEPTAR PAGO A $200")}${badge}`,
  cardPay: svg`${fadedPos}${panel(251, 0, 411, 228)}<g transform="translate(${331 * UX} ${71 * UY})" fill="#dcdcdc"><rect x="-6" y="-5" width="8" height="11" rx="1"></rect><rect x="-4.5" y="-3" width="5" height="2" fill="#f3f3f3"></rect><rect x="2.6" y="-4" width="4" height="8" fill="none" stroke="#dcdcdc"></rect></g>
    ${mid(331, 105, "Ingresa la tarjeta", 2.7)}${mid(331, 116, "de credito/debito", 2.7)}${mid(331, 128, "en el lector.", 2.7)}${btn(251, 199, 411, 228, "CANCELAR")}${pay(-88, "Tarjeta", 328, ["$199.50", "$199.50", "$0.00"], "", true)}${badge}`,
  done: svg`${fadedPos}${panel(116, 0, 318, 321, "#fff")}<g transform="translate(${217 * UX} ${149 * UY})" fill="none" stroke="#7ddc6b" stroke-width=".9"><circle r="9.2"></circle><path d="M-4.5-1.4H4.5M-3.6-1L-3 3.6H1.4M-2.4-1.6L-1-4.2H1L2.4-1.6M3.6-1V1M3.4 2.4V6M1.8 4.2L3.4 6L5 4.2"></path></g>
    ${mid(217, 194, "¡VENTA EXITOSA!", 2.6)}${btn(116, 293, 318, 321, "CERRAR")}${badge}`,
  part: svg`${fadedPos}${panel(79, 0, 365, 178)}${box(79, 148, 365, 178, "#fafbfd")}${mid(119, 161, "CERRAR", 2.5, INK, 600)}${badge}`,
  find: svg`${fadedPos}${search(false)}${badge}`,
  findHit: svg`${fadedPos}${search(true)}${badge}`,
  inv: svg`${inventory(false)}${badge}`,
  invMenu: svg`${inventory(true)}${badge}`,
  invList: svg`${stockList}${badge}`,
  count: count(false),
  waste: count(true),
  notice: svg`${inventory(false)}${scrim(0.94)}${panel(69, 0, 365, 208)}<path d="M${210 * UX} ${62 * UY}h6v-7h4M${212 * UX} ${55 * UY}h4v-5h5" fill="none" stroke="#d6d6d6" stroke-width="1.6"></path>
    ${["Recuerda realizar tu inventario", "semanal para llevar un control", "exacto de tus ganancias y", "pérdidas de dinero por merma."].map((s, i) => mid(221, 81 + i * 11.6, s, 3.1, INK, 500))}${foot(69, 175, 145, 365, 208, "MAS TARDE", "HACER INVENTARIO")}${badge}`,
  detail: svg`${stockList}${scrim(0.92)}${panel(45, 0, 388, 217)}${line(45, 33, 388, 33, "#e4e4e4")}${box(54, 51, 114, 102, "#fff", { s: "#e6e6e6" })}${txt(54, 121, "Carlos V - Clásico", 2.4, "#444")}${txt(54, 132, "18 g", 2.1, GREY)}${foot(45, 184, 121, 388, 217, "CANCELAR", "")}${badge}`,
  rep: svg`${report("plain")}${badge}`,
  repScroll: svg`${reportScroll}${badge}`,
  mail: svg`${reportScroll}${scrim(0.96)}${ask(46, 388, svg`<path d="M${207 * UX} ${46 * UY}l5-3.5l5 3.5v6h-10zM${209 * UX} ${38 * UY}h7v5M${211 * UX} ${49 * UY}l3 2l3-2" fill="none" stroke="#cfcfcf" stroke-width=".9"></path>`, ["Enviaremos tu reporte", "al siguiente correo:"], "jorge@hotmail.com", "ENVIAR")}`,
  comp: svg`${report("compare")}${badge}`,
  compTip: svg`${report("tip")}${badge}`,
  hover: svg`${report("hover")}${badge}`,
  ghost1: ghost(218),
  ghost2: ghost(218),
  acc: svg`${account}${badge}`,
  accScroll: svg`${accountScroll}${badge}`,
  ticket,
  orders: svg`${orders(false)}${badge}`,
  ordersEmpty: svg`${orders(true)}${badge}`,
  prof: svg`${profile}${badge}`,
  phone: svg`${profile}${scrim(0.95)}${ask(45, 387, svg`<g transform="translate(${215 * UX} ${48 * UY})" fill="#c4c4c4"><circle cy="-2.5" r="3.2"></circle><path d="M-5.6 5.4Q-5.6.8 0 .8T5.6 5.4Z"></path></g>`, ["Edita el número", "telefónico de tu cuenta"], "55 55 55 55", "GUARDAR")}`,
  mk: svg`${market(0, 2, true)}${badge}`,
  mkCat: svg`${market(2, 2, false, true)}${badge}`,
  mkSub: svg`${market(2, 3, false)}${badge}`,
  mkFind: svg`${fadedMarket}${search(true)}${badge}`,
  mkAdd: addItem,
  mkCart: svg`${cart}${badge}`,
  mkPlan: svg`${fadedMarket}${panel(43, 0, 388, 240)}${line(43, 33, 388, 33, "#e4e4e4")}${foot(43, 207, 121, 388, 240, "CANCELAR", "")}${badge}`,
};

@customElement("art-board")
class ArtBoard extends LitElement {
  @property() kind = "empty";
  static styles = css`
    :host { display: block; width: 182.3px; height: 113.9px; background: #fff; box-shadow: 0 1px 3px rgba(0, 0, 0, 0.32); }
    svg { display: block; width: 100%; height: 100%; overflow: hidden; font-family: Roboto, "Open Sans", sans-serif; }
  `;
  render() {
    return html`<svg viewBox="0 0 182.3 113.9" preserveAspectRatio="none">
      <defs><filter id="lift" x="-10%" y="-10%" width="120%" height="120%"><feDropShadow dx="0" dy=".6" stdDeviation=".8" flood-opacity=".32"></feDropShadow></filter></defs>
      ${BOARDS[this.kind]}
    </svg>`;
  }
}

/* ------------------------------------------------------------------ */
/* Canvas                                                              */
/* ------------------------------------------------------------------ */
const COL = [526.8, 720.4, 913.5, 1101.4, 1289.2, 1476.8, 1665];
const ROW = [173, 297.4, 422.6, 547, 672.6, 796.8, 922, 1046];
const PLACED: Array<[number, number, string, string]> = [
  [0, 0, "1-1 (sin productos)", "empty"], [0, 1, "2-1 (pad)", "pad"], [0, 2, "2-1 (forma de pago)", "pay"], [0, 3, "2-2 (modal - efectivo)", "cash"], [0, 4, "2-4 (modal - tarjeta)", "cardPay"], [0, 5, "2-5 (modal - confirmación)", "done"], [0, 6, "2-6 (confirmación)", "part"],
  [1, 0, "1-2 (con-productos)", "full"], [1, 1, "3-1 (búsqueda s-productos)", "find"], [1, 2, "3-1 (búsqueda c-productos)", "findHit"], [1, 3, "2-3 (modal - efectivo selected)", "cash200"],
  [2, 0, "4-1 (inventario)", "inv"], [2, 1, "4-2 (inventario - ordenar por)", "invMenu"], [2, 2, "4-3 (pantalla hacer inventario)", "invList"], [2, 3, "4-4 (haciendo-inventario)", "count"], [2, 4, "4-5 (producto-merma)", "waste"], [2, 5, "4-6 (notificación-inventario)", "notice"], [2, 6, "4-7 (perfil-detalle)", "detail"],
  [3, 0, "5-1 (reportes)", "rep"], [3, 1, "5-2 (reportes - scroll down)", "repScroll"], [3, 2, "5-3 (reportes - enviar email)", "mail"], [3, 3, "5-4 (reportes - comparaciones)", "comp"], [3, 4, "5-5 (reportes -...ciones - tooltip)", "compTip"], [3, 5, "5-6 (reportes_hover)", "hover"], [3, 6, "4-7-1 (perfil-detalle)", "ghost1"],
  [4, 0, "6 (mi cuenta)", "acc"], [4, 1, "6-1 (mi cuenta - scroll)", "accScroll"], [4, 2, "6-2 (mi cuenta - ticket)", "ticket"], [4, 3, "6-3 (mi cuenta...istorial pedidos)", "orders"], [4, 4, "6-4 (mi cuenta...pedidos - vacío)", "ordersEmpty"], [4, 6, "4-7-2 (perfil-detalle)", "ghost2"],
  [5, 0, "7-1 (perfil)", "prof"], [5, 1, "7-2 (perfil - editar campo)", "phone"],
  [6, 0, "8-1 (marketplace)", "mk"], [6, 1, "8-2 (marketplace - categorías)", "mkCat"], [6, 2, "8-3 (marketpla...- subcategorías)", "mkSub"], [6, 3, "8-4 (marketplace - búsqueda)", "mkFind"], [6, 4, "8-5 (marketpla...módulo agregar)", "mkAdd"], [6, 5, "8-6 (marketpla...rrito de compra)", "mkCart"], [6, 6, "8-7 (marketplace)", "mkPlan"],
  [7, 0, "8-11 (marketplace - ver carrito)", "mk"],
];
const CANVAS_X = 463;
const CANVAS_Y = 134;

@customElement("design-canvas")
class DesignCanvas extends LitElement {
  static styles = css`
    :host { display: block; position: relative; overflow: hidden; background: #f1f1f1; }
    .node { position: absolute; }
    .name { position: absolute; left: 3px; top: -18px; font-size: 11.4px; line-height: 15px; letter-spacing: 0.03px; white-space: nowrap; color: #878787; }
    .tight { letter-spacing: -0.12px; }
  `;
  render() {
    return PLACED.map(([r, c, name, kind]) => {
      const x = (kind === "phone" ? 728 : COL[c]) - CANVAS_X;
      return html`<div class="node" style="left:${x}px;top:${ROW[r] - CANVAS_Y}px"><span class="name ${name.includes("...") && r === 6 ? "tight" : ""}">${name}</span><art-board .kind=${kind}></art-board></div>`;
    });
  }
}

/* ------------------------------------------------------------------ */
/* Toolbar                                                             */
/* ------------------------------------------------------------------ */
const handles = (x1: number, y1: number, x2: number, y2: number) => [[x1, y1], [x2, y1], [x1, y2], [x2, y2]].map(([x, y]) => svg`<rect x=${x - 1.2} y=${y - 1.2} width="2.4" height="2.4" fill="#fff" stroke="#b5b5b5" stroke-width=".6"></rect>`);
const TOOLS: Array<[number, string, unknown, boolean]> = [
  [82, "Insert", svg`<rect x="0" y="4.5" width="20" height="20" rx="3.5" fill="#fcfcfc" stroke="#a5a5a5" stroke-width=".8"></rect><path d="M10 8.5V20.5M4 14.5H16" stroke="#444" stroke-width="1.3"></path><path d="M24 18.5h6l-3 4z" fill="#333"></path>`, true],
  [212.8, "Group", svg`<rect x="4" y="4" width="20" height="21" fill="none" stroke="#bbb" stroke-width=".8"></rect><rect x="12" y="12" width="10" height="10.5" rx="2" fill="#e6e6e6" stroke="#bcbcbc" stroke-width=".7"></rect><rect x="7" y="8" width="9.5" height="10" rx="1.2" fill="#8cd3ec" stroke="#6db9d6" stroke-width=".6"></rect>${handles(4, 4, 24, 25)}`, false],
  [259, "Ungroup", svg`<rect x="11.5" y="11" width="13" height="13.5" fill="#e2e2e2" stroke="#bcbcbc" stroke-width=".7"></rect><rect x="4" y="4" width="13" height="13.5" fill="#8cd3ec" stroke="#7cc2dd" stroke-width=".6"></rect>${handles(4, 4, 17, 17.5)}${handles(11.5, 11, 24.5, 24.5)}`, false],
  [418, "Create Symbol", svg`<rect x="4" y="4.5" width="20" height="20" rx="3.5" fill="#e7e7e7" stroke="#b9b9b9" stroke-width=".8"></rect><path d="M13 19H11.500q-2 0-2-2v-6.500M7.300 12L9.500 9.600l2.200 2.400M15 10H16.500q2 0 2 2v6.500M16.300 17l2.200 2.400l2.200-2.400" fill="none" stroke="#d28bdc" stroke-width="1.3"></path>`, false],
  [587.7, "18%", svg`<path d="M-12 14.500h7.500M33.500 14.500h8M37.500 10.500v8" stroke="#484848" stroke-width="1.900"></path><circle cx="12.500" cy="11.500" r="7.300" fill="#dfe7ee" stroke="#3e3e3e" stroke-width="1.500"></circle><path d="M6.800 10a6 6 0 0 1 11.400 0z" fill="#f7fafc"></path><path d="M18 17.500l6 6.500" stroke="#3a3a3a" stroke-width="2.800" stroke-linecap="round"></path>`, true],
  [732.7, "Edit", svg`<circle cx="14" cy="14.500" r="10" fill="none" stroke="#b5b5b5" stroke-width=".8"></circle><path d="M20.500 6.500A10.300 10.300 0 1 1 7.500 22Z" fill="#a8dc73"></path><path d="M7 22L21 6.500" stroke="#9c9c9c" stroke-width=".8"></path><rect x="12.400" y="12.900" width="2.800" height="2.800" fill="#fff"></rect><rect x="19" y="5" width="2.800" height="2.800" fill="#fff"></rect>`, false],
  [780, "Transform", svg`<rect x="3.500" y="4" width="21" height="21" fill="#c7dc88" stroke="#b9c690" stroke-width=".7"></rect><path d="M9.500 9h9L23.500 25h-19z" fill="#a4d765" stroke="#8cb95b" stroke-width=".7"></path>${handles(3.5, 4, 24.5, 25)}${handles(9.5, 9, 18.5, 9)}`, false],
  [831.3, "Rotate", svg`<path d="M11 4.500Q2 8 3 15q.6 4 3 6.500L3.500 25h8.500v-8l-2.500 2.500q-5-6 1.500-15zM17 24.500Q26 21 25 14q-.6-4-3-6.500L24.500 4H16v8l2.500-2.500q5 6-1.500 15z" fill="#a8dc6c" stroke="#98bf74" stroke-width=".6"></path>`, false],
  [873.8, "Flatten", svg`<path d="M11 10a6.300 6.300 0 0 1 12.500-1q2 4-2 8l-4.500 4A6.800 6.800 0 0 1 4 19q0-6 7-9z" fill="#8edfcd" stroke="#86bdb1" stroke-width=".7"></path><path d="M22.500 6.500q3.500 6-1 10.500l-4.500 4q-3 5-9 3z" fill="#a8dc6c"></path>`, false],
  [1004.5, "Mask", svg`<circle cx="16" cy="14.500" r="10" fill="#acd96f" stroke="#9fbf76" stroke-width=".7"></circle><rect x="5" y="8" width="15" height="13.500" fill="#8fd3ee" stroke="#fff" stroke-width="1.200"></rect>`, false],
  [1040.3, "Scale", svg`<circle cx="16" cy="12.500" r="8.700" fill="#b1dc74" stroke="#9abf6c" stroke-width=".7"></circle><circle cx="11.500" cy="17.500" r="6" fill="#b1dc74" stroke="#9abf6c" stroke-width=".7"></circle><circle cx="8.500" cy="20.800" r="4.200" fill="#a8d76a" stroke="#9abf6c" stroke-width=".7"></circle>`, false],
  [1168.3, "Union", svg`<path d="M12.500 4H23q1.500 0 1.500 1.500v10q0 1.500-1.500 1.500H17v6.500q0 1.500-1.500 1.500H5q-1.500 0-1.500-1.500v-10Q3.500 12 5 12h6V5.500Q11 4 12.500 4z" fill="#94dfcf" stroke="#85cabb" stroke-width=".7"></path>`, false],
  [1212.7, "Subtract", svg`<rect x="3.500" y="12" width="13.500" height="13" rx="1.500" fill="#94dfcf" stroke="#85cabb" stroke-width=".7"></rect><rect x="11" y="4" width="13.500" height="13" rx="1.500" fill="#e8e8e8" stroke="#bcbcbc" stroke-width=".7"></rect>`, false],
  [1265.3, "Intersect", svg`<rect x="3.500" y="12" width="13.500" height="13" rx="1.500" fill="#e3e3e3" stroke="#bcbcbc" stroke-width=".7"></rect><rect x="11" y="4" width="13.500" height="13" rx="1.500" fill="#e8e8e8" stroke="#bcbcbc" stroke-width=".7"></rect><rect x="11" y="12" width="6" height="5.500" fill="#83d9c7"></rect>`, false],
  [1322.5, "Difference", svg`<rect x="3.500" y="12" width="13.500" height="13" rx="1.500" fill="#94dfcf" stroke="#85cabb" stroke-width=".7"></rect><rect x="11" y="4" width="13.500" height="13" rx="1.500" fill="#94dfcf" stroke="#85cabb" stroke-width=".7"></rect><rect x="11.500" y="12.200" width="5.500" height="5" fill="#eee"></rect>`, false],
  [1469, "Forward", svg`<path d="M14 3.500l5 6.500h-3v9h8.500v6h-21v-6H12v-9H9z" fill="#86d0e8" stroke="#77bcd3" stroke-width=".6"></path><path d="M4 12h8v4.500H4zM16 12h8v4.500h-8z" fill="#e6e6e6" stroke="#c0c0c0" stroke-width=".6"></path>`, false],
  [1523.4, "Backward", svg`<rect x="3.500" y="4" width="21" height="5.500" fill="#86d0e8" stroke="#77bcd3" stroke-width=".6"></rect><rect x="4.500" y="11" width="19" height="4.500" fill="#e6e6e6" stroke="#c0c0c0" stroke-width=".6"></rect><path d="M12.500 17h3v2.500h3.200L14 25l-4.700-5.500h3.200z" fill="#86d0e8" stroke="#77bcd3" stroke-width=".6"></path>`, false],
  [1662.3, "Mirror", svg`<rect x="4" y="4.500" width="20" height="20" rx="3.500" fill="#fefefe" stroke="#a5a5a5" stroke-width=".8"></rect><path d="M9.500 8.500h9l3 4L14 21.500L6.500 12.500z" fill="#fdad00"></path><path d="M10 12.500h8L14 21.500z" fill="#f58a00"></path><path d="M6.500 12.500L9.500 8.500L10 12.500zM18 12.500l.5-4l3 4z" fill="#ffcf40"></path>`, true],
  [1701.3, "Cloud", svg`<path d="M7 21.500a5.500 5.500 0 0 1-.5-10.500Q8 4.500 14 4.500T21 10.500a5.700 5.700 0 0 1 .5 11z" fill="#35b9ef" stroke="#1d9bd3" stroke-width=".7"></path><path d="M14 26V12.500M9.500 16.500L14 11.700l4.500 4.800" fill="none" stroke="#fff" stroke-width="2"></path>`, true],
  [1831.6, "View", svg`<rect x="0" y="4.500" width="20" height="20" rx="3.500" fill="#fcfcfc" stroke="#a5a5a5" stroke-width=".8"></rect><path d="M3.500 8.500h13v12h-13zM3.500 11.500h13M7.500 11.500v9" fill="none" stroke="#444" stroke-width="1.300"></path><path d="M24 18.500h6l-3 4z" fill="#333"></path>`, true],
  [1964.5, "Export", svg`<rect x="6" y="10" width="16" height="15" rx="2.500" fill="#fafafa" stroke="#b5b5b5" stroke-width=".8"></rect><path d="M14 17V3.500M9 8.500L14 2.800l5 5.700" fill="none" stroke="#3d3d3d" stroke-width="1.600"></path>`, true],
];

@customElement("tool-bar")
class ToolBar extends LitElement {
  static styles = css`
    :host { display: flex; flex-direction: column; background: linear-gradient(#ebebeb, #cfcfcf); border-bottom: 1px solid #b4b4b4; box-sizing: border-box; }
    .title { display: grid; grid-template-columns: 1fr auto 1fr; align-items: center; height: 24px; padding: 0 2px 0 9px; box-sizing: border-box; }
    .lights { display: flex; gap: 9px; }
    .light { width: 12px; height: 12px; border-radius: 50%; }
    .red { background: #fc5b57; } .yellow { background: #fdbb2e; } .green { background: #25c940; }
    .doc { display: flex; align-items: center; gap: 5px; font-size: 13.2px; color: #3b3b3b; letter-spacing: 0.1px; margin-left: 9px; font-weight: 450; }
    .edited { color: #9f9f9f; font-weight: 400; }
    .doc svg { flex: none; }
    .plugin { justify-self: end; display: flex; align-items: center; gap: 5px; height: 16px; padding: 0 7px 0 5px; border-radius: 3px; background: #e2d1e5; font-size: 10.900px; font-weight: 450; color: #464646; letter-spacing: -0.03px; }
    .plugin i { width: 5px; height: 5px; border-radius: 50%; background: #ea3bf2; }
    .row { display: flex; height: 46px; }
    .tool { flex: none; width: 0; display: flex; flex-direction: column; align-items: center; font-size: 11px; font-weight: 450; color: #8a8a8a; white-space: nowrap; letter-spacing: -0.1px; }
    .tool.on { color: #2c2c2c; }
    .tool svg { width: 28px; height: 28px; overflow: visible; flex: none; margin-bottom: 1.500px; }
    .tool span { line-height: 14px; }
  `;
  render() {
    let prev = 58;
    return html`
      <div class="title">
        <div class="lights"><i class="light red"></i><i class="light yellow"></i><i class="light green"></i></div>
        <div class="doc">
          <svg width="13" height="17" viewBox="0 0 13 17"><path d="M.5 .5h8.500l3.500 3.500v12.500h-12z" fill="#fff" stroke="#aaa" stroke-width=".7"></path><path d="M4 5h5l2 2.500L6.500 12.500L2 7.500z" fill="#fca510"></path><path d="M4.500 7.500h4l-2 5z" fill="#f07c00"></path></svg>
          <span>UI Library V2 <span class="edited">— Edited</span></span>
          <svg width="9" height="6" viewBox="0 0 9 6"><path d="M1 1l3.500 3.500L8 1" fill="none" stroke="#9a9a9a" stroke-width="1.300"></path></svg>
        </div>
        <div class="plugin"><i></i>Incompatible Plugin Disabled</div>
      </div>
      <div class="row">
        ${TOOLS.map(([c, label, icon, on]) => {
          const gap = c - prev;
          prev = c;
          return html`<div class="tool ${on ? "on" : ""}" style="margin-left:${gap}px"><svg viewBox="0 0 28 28">${icon}</svg><span>${label}</span></div>`;
        })}
      </div>`;
  }
}

/* ------------------------------------------------------------------ */
/* Layer list                                                          */
/* ------------------------------------------------------------------ */
const LAYERS = ["4-7-1 (perfil-detalle-producto-selected V1)", "4-7-2 (perfil-detalle-producto-selected V2)", "4-8 (búsqueda-producto-inventario)", "4-9 (agregar-producto)", "4-10 (inventario - lista productos para agregar)",
  "5-1 (reportes)", "5-2 (reportes - scroll down)", "5-3 (reportes - enviar email)", "5-4 (reportes - comparaciones)", "5-5 (reportes - comparaciones - tooltip)", "5-6 (reportes_hover)",
  "6 (mi cuenta)", "6-1 (mi cuenta - scroll)", "6-2 (mi cuenta - ticket)", "6-3 (mi cuenta - historial pedidos)", "6-4 (mi cuenta - historial pedidos - vacío)", "7-1 (perfil)", "7-2 (perfil - editar campo)",
  "8-1 (marketplace)", "8-2 (marketplace - categorías)", "8-3 (marketplace - subcategorías)", "8-4 (marketplace - búsqueda)", "8-5 (marketplace - módulo agregar)", "8-6 (marketplace - carrito de compra)", "8-7 (marketplace - programar pedido)",
  "8-8 (marketplace) copy", "8-9 (marketplace - historial pedidos)", "8-10 (marketplace - historial pedidos TICKET)", "8-11 (marketplace - ver carrito)"];

@customElement("layer-list")
class LayerList extends LitElement {
  static styles = css`
    :host { display: flex; flex-direction: column; background: #fafafa; border-right: 1px solid #b6b6b6; box-sizing: border-box; font-size: 11.600px; font-weight: 500; letter-spacing: -0.09px; color: #111; }
    .head { display: flex; align-items: center; justify-content: space-between; height: 29px; box-sizing: border-box; padding: 1px 8px 0 11px; background: #f4f4f4; border-bottom: 2px solid #cacaca; flex: none; }
    .pages { background: #ebebeb; height: 167px; flex: none; border-bottom: 1px solid #c2c2c2; }
    .page { height: 28px; display: flex; align-items: center; padding: 1px 0 0 29px; box-sizing: border-box; }
    .page.sel { background: #6b9be4; color: #fff; font-weight: 400; }
    .sub { height: 28px; color: #808080; padding: 2px 6px 0 11px; font-weight: 400; }
    .slot { height: 4px; flex: none; border-bottom: 1px solid #cacaca; }
    .layers { flex: 1; display: flex; flex-direction: column; min-height: 0; }
    .layer { flex: 1; display: flex; align-items: center; gap: 10px; padding: 0 0 0 13px; box-sizing: border-box; border-bottom: 1px solid #c9c9c9; white-space: nowrap; }
    .layer i { flex: none; border: 6px solid transparent; border-left: 6px solid #9c9c9c; border-right: 0; }
    .layer span { padding-top: 2px; }
    .filter { flex: none; height: 33px; display: flex; align-items: center; background: #f4f4f4; padding: 0 7px 0 5px; gap: 4px; color: #3d8cf5; font-weight: 600; font-size: 11px; border-top: 1px solid #bdbdbd; box-sizing: border-box; }
    .field { flex: none; width: 306px; height: 19px; box-sizing: border-box; background: #fff; border: 1px solid #cdcdcd; border-radius: 3px; display: flex; align-items: center; justify-content: center; gap: 6px; color: #c3c3c3; font-weight: 400; font-size: 11.800px; margin-right: 10px; padding-right: 14px; }
  `;
  render() {
    return html`
      <div class="head"><span>Pages</span><svg width="12" height="12" viewBox="0 0 12 12"><path d="M6 0v12M0 6h12" stroke="#9b9b9b" stroke-width="1.500"></path></svg></div>
      <div class="pages"><div class="page">UI library</div><div class="page sel">UI</div><div class="page">Symbols</div></div>
      <div class="head sub"><span>UI</span><svg width="14" height="13" viewBox="0 0 14 13"><path d="M.7 .7h12.600v11.600H.7zM.7 2.500h12.600" fill="none" stroke="#9a9a9a" stroke-width="1.300"></path><path d="M4 9l3-4 3 4z" fill="#8d8d8d"></path></svg></div>
      <div class="slot"></div>
      <div class="layers">${LAYERS.map((l) => html`<div class="layer"><i></i><span>${l}</span></div>`)}</div>
      <div class="filter">
        <div class="field"><svg width="12" height="12" viewBox="0 0 12 12"><circle cx="5" cy="5" r="4.200" fill="none" stroke="#777" stroke-width="1.100"></circle><path d="M8 8l3.500 3.500" stroke="#777" stroke-width="1.200"></path></svg>Filter</div>
        <svg width="13" height="13" viewBox="0 0 13 13"><path d="M.8 4h8v8h-8zM3.500 3.500V.9h8.700v8.700H9.500" fill="none" stroke="#3d8cf5" stroke-width="1.400"></path></svg>
        <svg width="13" height="13" viewBox="0 0 13 13"><path d="M12.500 0L6 5L4 8L0 12.800L6.500 9.500L8.500 7z" fill="#2f86fb"></path></svg>
        <span>74</span>
      </div>`;
  }
}

/* ------------------------------------------------------------------ */
/* Inspector                                                           */
/* ------------------------------------------------------------------ */
const STRIP = [
  svg`<path d="M11 16V3M6 7.500L11 2.500l5 5M2 13v9h18v-9" fill="none" stroke="#626262" stroke-width="2"></path>`,
  svg`<path d="M5 2.500h12M4 5.500h14" stroke="#626262" stroke-width="1.200"></path><path d="M3 14V9.500h16V14" fill="none" stroke="#626262" stroke-width="1.200"></path><rect x="1" y="15.500" width="20" height="6.500" fill="#626262"></rect>`,
  svg`<rect x="1" y="1.500" width="20" height="20" fill="none" stroke="#626262" stroke-width="1.200" stroke-dasharray="1.500 1.300"></rect><path d="M5 5h4v4.500H5zM11.500 5.500H18M11.500 9H18M4 13h14M4 17.500h9.500" fill="none" stroke="#626262" stroke-width="1.800"></path>`,
  svg`<rect x="1" y="1" width="9" height="10" fill="#626262"></rect><rect x="13" y="1.500" width="8" height="9" fill="none" stroke="#626262" stroke-width="1.300" stroke-dasharray="2 1.200"></rect><rect x="1.500" y="13" width="8" height="9" fill="none" stroke="#626262" stroke-width="1.300" stroke-dasharray="2 1.200"></rect>`,
  svg`<path d="M2.500 2.500h17v18h-17z" fill="none" stroke="#626262" stroke-width="1.200"></path><path d="M11.500 6l4.500 4.500L8 20.500H3v-5z" fill="#ededed" stroke="#626262" stroke-width="1.500"></path><path d="M11.500 6l4.500 4.500l-3 3.700l-4.700-4.200z" fill="#626262"></path><g fill="#626262"><rect x="1" y="1" width="3" height="3"></rect><rect x="18" y="1" width="3" height="3"></rect><rect x="18" y="19" width="3" height="3"></rect></g>`,
  svg`<path d="M12 3.500H2v18h15.500V11" fill="none" stroke="#626262" stroke-width="1.400"></path><path d="M17.500 0v9M13 4.500h9" stroke="#626262" stroke-width="1.800"></path><path d="M3.500 17.500l3-4l1.500 2l-1 2zM8.500 17.500l3.500-6l4 6z" fill="#626262"></path>`,
];
const ALIGN: Array<[number, unknown]> = [
  [1781, svg`<path d="M1 0v15M14 0v15" stroke="#bcbcbc"></path><rect x="5.500" y="2" width="4" height="11" rx=".8" fill="#8ecbfa"></rect>`],
  [1809, svg`<path d="M0 1.500h15M0 13.500h15" stroke="#bcbcbc"></path><rect x="2.500" y="6" width="10" height="3.500" rx=".8" fill="#8ecbfa"></rect>`],
  [1826, svg`<path d="M7.500-6V21" stroke="#dedede"></path>`],
  [1843, svg`<path d="M1.500 0v15" stroke="#bcbcbc"></path><rect x="3.500" y="2.500" width="11" height="3.800" rx=".8" fill="#8ecbfa"></rect><rect x="3.500" y="9" width="7.500" height="3.800" rx=".8" fill="#8ecbfa"></rect>`],
  [1869, svg`<path d="M7.500 0v15" stroke="#9cb4c8"></path><rect x="1" y="2.500" width="13" height="3.800" rx=".8" fill="#8ecbfa"></rect><rect x="3" y="9" width="9" height="3.800" rx=".8" fill="#8ecbfa"></rect>`],
  [1896, svg`<path d="M13.500 0v15" stroke="#bcbcbc"></path><rect x="1" y="2.500" width="11" height="3.800" rx=".8" fill="#8ecbfa"></rect><rect x="4.500" y="9" width="7.500" height="3.800" rx=".8" fill="#8ecbfa"></rect>`],
  [1922, svg`<path d="M0 .8h15" stroke="#bcbcbc"></path><rect x="2.500" y="2.500" width="3.800" height="10.500" rx=".8" fill="#8ecbfa"></rect><rect x="9" y="2.500" width="3.800" height="7.500" rx=".8" fill="#8ecbfa"></rect>`],
  [1947.5, svg`<path d="M0 7.500h15" stroke="#9cb4c8"></path><rect x="2.500" y="1.500" width="3.800" height="12" rx=".8" fill="#8ecbfa"></rect><rect x="9" y="3.500" width="3.800" height="8" rx=".8" fill="#8ecbfa"></rect>`],
  [1973.6, svg`<path d="M0 14h15" stroke="#bcbcbc"></path><rect x="2.500" y="2" width="3.800" height="10.500" rx=".8" fill="#8ecbfa"></rect><rect x="9" y="5" width="3.800" height="7.500" rx=".8" fill="#8ecbfa"></rect>`],
];

@customElement("side-inspector")
class SideInspector extends LitElement {
  static styles = css`
    :host { display: flex; font-size: 11.600px; font-weight: 450; letter-spacing: -0.04px; color: #161616; background: #e6e6e6; }
    .strip { width: 43px; box-sizing: border-box; display: flex; flex-direction: column; border-left: 1px solid #a9a9a9; border-right: 1px solid #a9a9a9; background: #e9e9e9; }
    .tab { height: 29px; background: #c9c9c9; border-bottom: 1px solid #b8b8b8; }
    .cell { height: 41.700px; border-bottom: 1px solid #b0b0b0; background: #ededed; }
    .tab, .cell { display: flex; align-items: center; justify-content: center; box-sizing: border-box; flex: none; }
    .grow { flex: 1; }
    .bolt { height: 43px; border-top: 1px solid #b0b0b0; border-bottom: 0; }
    .main { flex: 1; display: flex; flex-direction: column; }
    .align { display: flex; height: 29px; box-sizing: border-box; background: #f8f8f8; border-bottom: 2px solid #c6c6c6; align-items: center; overflow: hidden; padding-top: 1px; }
    .align svg { width: 15px; height: 15px; flex: none; margin-right: -15px; overflow: visible; }
    .geo { display: grid; grid-template-columns: 66px 60.500px 17.500px 60.500px; grid-auto-rows: 19px 17.600px; padding: 8px 0 0 8px; align-items: center; height: 119.500px; box-sizing: border-box; }
    .in { background: #fff; border: 1px solid #c4c4c4; height: 19px; box-sizing: border-box; }
    .cap { text-align: center; font-size: 10.800px; padding-bottom: 1px; }
    .flip { display: flex; background: #f2f2f2; border: 1px solid #cfcfcf; border-radius: 3px; height: 17px; justify-content: space-evenly; align-items: center; }
    .look { border-top: 1px solid #c8c8c8; padding: 8px 10px 0 8px; height: 67.500px; box-sizing: border-box; display: flex; flex-direction: column; gap: 8.500px; }
    .line { display: flex; align-items: center; height: 20px; }
    .line span { width: 66px; }
    .slide { width: 83px; height: 13px; display: flex; align-items: center; margin-right: 12px; }
    .wide { flex: 1; }
    .knob { width: 12px; height: 12px; border-radius: 50%; background: #fbfbfb; box-shadow: 0 0 1px #888; flex: none; box-sizing: border-box; }
    .track { height: 3px; flex: 1; background: #c9c9c9; border-radius: 0 2px 2px 0; }
    .sel { flex: 1; height: 20px; background: #f3f3f3; border: 1px solid #d0d0d0; border-radius: 3px; box-sizing: border-box; display: flex; align-items: center; justify-content: space-between; padding: 0 3px 0 8px; color: #7b7b7b; font-size: 12px; font-weight: 400; }
    .sec { height: 27.150px; box-sizing: border-box; border-top: 1px solid #c8c8c8; display: flex; align-items: center; gap: 7px; padding: 1px 8px 0; font-weight: 600; color: #444; font-size: 11.700px; }
    .last { border-bottom: 1px solid #c8c8c8; }
    .cb { width: 12px; height: 12px; box-sizing: border-box; border: 1px solid #c5c5c5; border-radius: 3px; background: #f1f1f1; margin-left: auto; }
  `;
  render() {
    let prev = 1767;
    const arrows = html`<svg width="9" height="13" viewBox="0 0 9 13"><path d="M1 4.500L4.500 1L8 4.500M1 8.500L4.500 12L8 8.500" fill="none" stroke="#858585" stroke-width="1.200"></path></svg>`;
    return html`
      <div class="strip">
        <div class="tab"><svg width="16" height="16" viewBox="0 0 16 16"><path d="M7 0v16A7.500 8 0 0 1 7 0zM8.500 0q5 .5 7 3.500V7H12l-3.500-2zM8.500 16q5-.5 7-3.500V9.500H12L8.500 12z" fill="#9a9a9a"></path></svg></div>
        ${STRIP.map((s) => html`<div class="cell"><svg width="22" height="23" viewBox="0 0 22 23">${s}</svg></div>`)}
        <div class="grow"></div>
        <div class="cell bolt"><svg width="14" height="20" viewBox="0 0 14 20"><path d="M9 0L0 11h5L4 20L14 8H8z" fill="#5e5e5e"></path></svg></div>
      </div>
      <div class="main">
        <div class="align">${ALIGN.map(([c, s], i) => {
          const gap = c - 7.5 - prev;
          prev = c - 7.5;
          return html`<svg viewBox="0 0 15 15" style="margin-left:${gap}px">${s}</svg>`;
        })}</div>
        <div class="geo">
          <span>Position</span><div class="in"></div><i></i><div class="in"></div>
          <i></i><div class="cap">X</div><i></i><div class="cap">Y</div>
          <span>Size</span><div class="in"></div><svg width="17" height="12" viewBox="0 0 17 12"><rect x="5" y="5" width="7" height="6.500" fill="#9a9a9a"></rect><path d="M6.500 5V3a2 2 0 0 1 4 0" fill="none" stroke="#9a9a9a" stroke-width="1.200"></path></svg><div class="in"></div>
          <i></i><div class="cap">Width</div><i></i><div class="cap">Height</div>
          <span>Transform</span><div class="in"></div><i></i><div class="flip"><svg width="14" height="12" viewBox="0 0 14 12"><path d="M5.500 0v12H0z" fill="#dcdcdc"></path><path d="M8 0v12h5.500z" fill="#bbb"></path></svg><svg width="12" height="14" viewBox="0 0 12 14"><path d="M0 0v6h11z" fill="#dcdcdc"></path><path d="M0 14V8h11z" fill="#bbb"></path></svg></div>
          <i></i><div class="cap">Rotate</div><i></i><div class="cap">Flip</div>
        </div>
        <div class="look">
          <div class="line"><span>Opacity</span><div class="slide"><i class="knob"></i><i class="track"></i></div><div class="in wide"></div></div>
          <div class="line"><span>Blending</span><div class="sel">Normal${arrows}</div></div>
        </div>
        ${["Fills", "Borders", "Shadows", "Inner Shadows"].map((s) => html`<div class="sec">${s}</div>`)}
        <div class="sec last">Gaussian Blur ${arrows}<i class="cb"></i></div>
      </div>`;
  }
}

/* ------------------------------------------------------------------ */
/* Window                                                              */
/* ------------------------------------------------------------------ */
const STEP = 104.1;
const fmt = (n: number) => n.toLocaleString("en-US");

@customElement("app-root")
class AppRoot extends LitElement {
  static styles = css`
    :host { display: block; box-sizing: border-box; width: 2048px; height: 1267px; padding: 33px 58px 83px; overflow: hidden; background: #fff; font-family: Inter, "Noto Sans", sans-serif; }
    .window { width: 1932px; height: 1151px; display: grid; grid-template-rows: 72px 1fr; border-radius: 6px 6px 5px 5px; overflow: hidden; box-shadow: 0 0 1px rgba(0, 0, 0, 0.6), 0 24px 44px rgba(0, 0, 0, 0.56); background: #f1f1f1; }
    .body { display: grid; grid-template-columns: 377px 28px 1261px 266px; grid-template-rows: 29px 1fr; min-height: 0; }
    layer-list, side-inspector { grid-row: 1 / 3; min-height: 0; }
    .corner { background: #fff; border-right: 1px solid #b5b5b5; border-bottom: 2px solid #c6c6c6; box-sizing: border-box; }
    .top { background: #fff; border-bottom: 2px solid #c6c6c6; box-sizing: border-box; overflow: hidden; }
    .side { background: #fff; border-right: 1px solid #b5b5b5; box-sizing: border-box; overflow: hidden; grid-column: 2; grid-row: 2; }
    .top svg, .side svg { display: block; }
    text { font-size: 11.200px; font-weight: 500; fill: #151515; }
    layer-list { grid-column: 1; }
    side-inspector { grid-column: 4; grid-row: 1 / 3; }
    .corner { grid-column: 2; grid-row: 1; }
    .top { grid-column: 3; grid-row: 1; }
    design-canvas { grid-column: 3; grid-row: 2; }
  `;
  render() {
    return html`
      <div class="window">
        <tool-bar></tool-bar>
        <div class="body">
          <layer-list></layer-list>
          <div class="corner"></div>
          <div class="top"><svg width="1261" height="27">
            ${seq(122).map((i) => { const x = 456.2 - CANVAS_X + (i * STEP) / 10; return svg`<line x1=${x} x2=${x} y1=${i % 10 ? 19 : 0} y2="27" stroke="#b9b9b9"></line>`; })}
            ${seq(12).map((i) => svg`<text x=${456.2 - CANVAS_X + (i + 1) * STEP + 3.5} y="14">${fmt((i + 1) * 550)}</text>`)}
          </svg></div>
          <div class="side"><svg width="27" height="1050">
            ${seq(102).map((i) => { const y = 147.3 - CANVAS_Y + ((i - 1) * STEP) / 10; return svg`<line y1=${y} y2=${y} x1=${(i - 1) % 10 ? 19 : 0} x2="27" stroke="#b9b9b9"></line>`; })}
            ${seq(10).map((i) => svg`<text transform="translate(14 ${147.3 - CANVAS_Y + i * STEP - 2.5}) rotate(-90)">${fmt(i * 550)}</text>`)}
          </svg></div>
          <design-canvas></design-canvas>
          <side-inspector></side-inspector>
        </div>
      </div>`;
  }
}
